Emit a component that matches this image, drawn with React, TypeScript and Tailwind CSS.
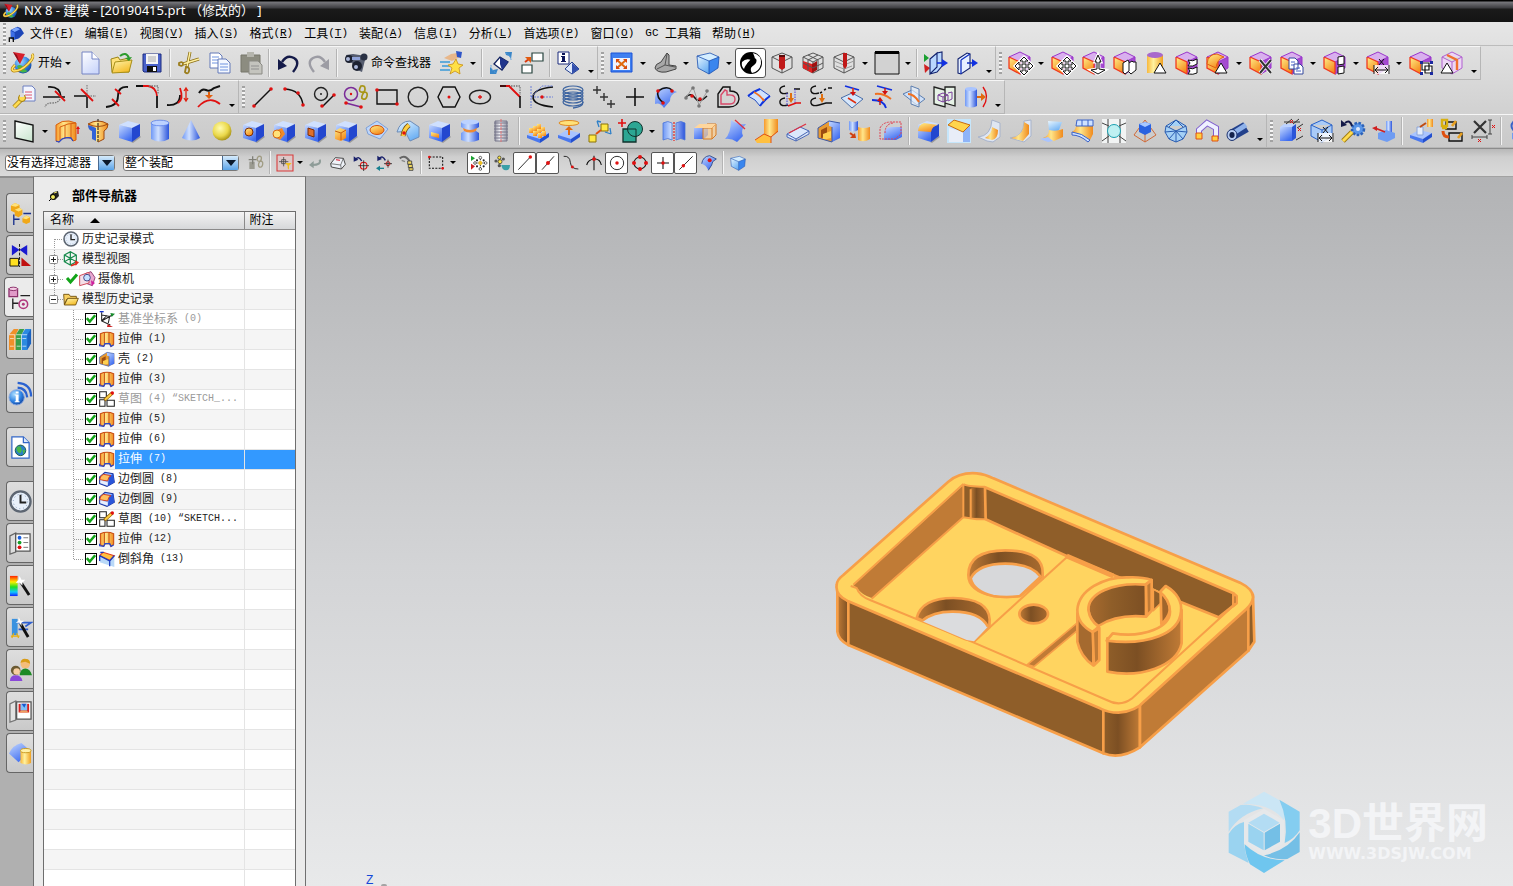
import type { ReactNode } from "react";

/* ---------- drawing helpers ---------- */

type StrokeProps = { d: string; c?: string; w?: number; dash?: string; f?: string };

function L({ d, c = "#111", w = 1.3, dash, f = "none" }: StrokeProps) {
  return <path d={d} fill={f} stroke={c} strokeWidth={w} strokeDasharray={dash} />;
}

function F({ d, f }: { d: string; f: string }) {
  return <path d={d} fill={f} />;
}

function D({ x, y, c = "#e01010", r = 1.8 }: { x: number; y: number; c?: string; r?: number }) {
  return <circle cx={x} cy={y} r={r} fill={c} />;
}

function Box() {
  return (
    <>
      <F d="M14 23l9-6 1 1-8 6z" f="#9a9a9a" />
      <F d="M2 6l9-4 12 3-8 4z" f="#cfe0ff" />
      <F d="M2 6l13 3v14L2 19z" f="url(#gBlueL)" />
      <F d="M15 9l8-4v12l-8 6z" f="#2347cf" />
    </>
  );
}

function Hex() {
  return (
    <>
      <F d="M1 6l11-5 10 5-10 5z" f="#d9b0ee" />
      <F d="M1 6l11 5v12L1 17z" f="url(#gOrange)" />
      <F d="M12 11l10-5v11l-10 6z" f="#a44bd0" />
      <L d="M1 6v11l11 6V11L1 6" c="#f03a20" />
      <L d="M1 6l11-5 10 5v11l-10 6M12 11l10-5" c="#9a35cc" w={1} />
    </>
  );
}

function WireCube({ c = "#555" }: { c?: string }) {
  return <L d="M2 6l10-4 10 4v11l-10 5-10-5zM2 6l10 5 10-5M12 11v11" c={c} w={1} f="#e8e8e855" />;
}

function Plate() {
  return (
    <>
      <F d="M1 16l9-5 13 3-9 6z" f="#a9c4ff" />
      <F d="M1 16l13 4v4L1 19z" f="#4a78ee" />
      <F d="M14 20l9-6v4l-9 6z" f="#2350d0" />
    </>
  );
}

function Cross() {
  const d = "M16 6l4 4h-3v4h4v-3l4 4-4 4v-3h-4v4h3l-4 4-4-4h3v-4h-4v3l-4-4 4-4v3h4v-4h-3z";
  return (
    <>
      <L d={d} c="#fff" w={3} f="#fff" />
      <L d={d} c="#111" w={1} f="#fff" />
    </>
  );
}

const icons: Record<string, ReactNode> = {
  nx: (
    <>
      <circle cx="12" cy="14" r="8.5" fill="url(#gGlobe)" />
      <F d="M6 15q4-3 7 2t5 1q-3 5-8 3-3-2-4-6z" f="#43b649" />
      <L d="M21 3q3 3-4 10T3 20q-4-1 1-6" c="#b9860c" w={3} />
      <L d="M21 3q3 3-4 10T3 20q-4-1 1-6" c="#ffe26a" w={1.6} />
      <F d="M2 1l12 2-5 10z" f="#d8202c" />
      <F d="M2 1l4 3 3 9z" f="#8e0d18" />
    </>
  ),
  part: (
    <>
      <F d="M4 6l10-5 5 2 5 8-7 7-2 1-7 2-4-3z" f="#1c45b8" />
      <F d="M5 6l8-4 5 3-8 4z" f="#7ba6ff" />
      <F d="M4 7l6 3v10l-5-2z" f="#3d6ee6" />
      <L d="M2 24v-6h6v6" w={2} />
    </>
  ),
  file: (
    <>
      <L d="M4 1h10l7 7v15H4z" c="#7484c4" f="url(#gPaper)" w={1} />
      <L d="M14 1v7h7" c="#7484c4" f="#fff" w={1} />
    </>
  ),
  open: (
    <>
      <L d="M2 8l7-2 2 3 9-2v14H3z" c="#9b8519" f="#ffe27a" w={1} />
      <L d="M3 22L6 11l17-2-3 12z" c="#a88f18" f="url(#gYellow)" w={1} />
      <L d="M11 5q6-5 9 2" c="#2d9b2d" w={2} />
      <F d="M16 7l7-1-3 4z" f="#2d9b2d" />
    </>
  ),
  save: (
    <>
      <L d="M3 3h18v18H4l-1-1z" c="#1c2d80" f="#4961c9" w={1} />
      <F d="M6 3h12v10H6z" f="#f4f4f4" />
      <L d="M8 6h8M8 8h8M8 10h8" c="#9a9a9a" w={0.8} />
      <F d="M7 15h10v6H7z" f="#111" />
      <F d="M13 16h3v4h-3z" f="#fff" />
    </>
  ),
  cut: (
    <>
      <L d="M13 1l-3 15M22 8L6 13" c="#8a6d14" w={3} />
      <L d="M13 1l-3 15M22 8L6 13" c="#fff0a0" w={1.4} />
      <L d="M2 12q4-2 4 1t-4 1zM9 16q4 0 3 4t-4 1z" c="#9b7d1c" w={1.8} />
    </>
  ),
  copy: (
    <>
      <L d="M2 2h9l3 3v12H2z" c="#6278b8" f="#fff" w={1} />
      <L d="M4 6h7M4 9h7M4 12h7" c="#6f93e0" w={1} />
      <L d="M10 8h8l4 4v10H10z" c="#6278b8" f="#f4f8ff" w={1} />
      <L d="M12 13h8M12 16h8M12 19h8" c="#6f93e0" w={1} />
    </>
  ),
  paste: (
    <>
      <L d="M2 4h19v17H2z" c="#77776a" f="#8c8c80" w={1} />
      <F d="M8 1h7v5H8z" f="#b5b5ad" />
      <L d="M10 10h9l4 4v9H10z" c="#8a8a84" f="#c4c4be" w={1} />
      <L d="M12 15h8M12 18h8" c="#909090" w={1} />
    </>
  ),
  undo: (
    <>
      <L d="M6 11q5-8 12-4t-1 14" c="#141a48" w={2.4} />
      <F d="M2 8v11l9-4z" f="#141a48" />
    </>
  ),
  redo: (
    <>
      <L d="M18 11q-5-8-12-4t1 14" c="#9c9ca4" w={2.4} />
      <F d="M22 8v11l-9-4z" f="#9c9ca4" />
    </>
  ),
  binoculars: (
    <>
      <F d="M2 4l7-1 13 2-4 16-7-3-3-6-6-3z" f="#555c6e" />
      <circle cx="5" cy="8" r="4" fill="#1c2130" />
      <circle cx="13" cy="15" r="5" fill="#1c2130" />
      <circle cx="4" cy="8" r="2" fill="#aab6d8" />
      <circle cx="12" cy="16" r="2" fill="#aab6d8" />
      <circle cx="20" cy="6" r="3.500" fill="#2a3144" />
      <F d="M8 6h8v3H8z" f="#8fa2d8" />
    </>
  ),
  star: (
    <>
      <L d="M0 11h10M2 15h9M0 19h10" c="#3a9bd8" w={1.5} />
      <F d="M4 7l7-4 6-1 3 4-8 4z" f="#e8b78a" />
      <F d="M16 0l6 1-1 6-4-1z" f="#2f55c8" />
      <L d="M16 8l2 5 5 1-4 3 1 6-5-3-5 3 2-6-4-3 5-1z" c="#c98f10" f="#ffe045" w={0.8} />
    </>
  ),
  rotate: (
    <>
      <L d="M5 13l6-7 8 5-6 8z" c="#10205c" f="#fff" />
      <F d="M11 6l8 5-6 8-2-6z" f="#20358c" />
      <F d="M16 1h7l-1 7-2-3-3-1zM1 16l3 3 5-1-2 5-6 0z" f="#3a86c8" />
      <L d="M2 14q0 6 6 8M17 2q5 3 5 7" c="#59a0e0" w={1} dash="1.5 1" />
    </>
  ),
  windows: (
    <>
      <L d="M12 2h11v8H12zM2 14h10v8H2z" c="#28443f" f="#fff" w={1.2} />
      <L d="M5 11l4-3" c="#d83a10" w={2} />
      <F d="M5 6h6v6z" f="#e25a10" />
    </>
  ),
  info: (
    <>
      <L d="M1 1h11v12H1z" c="#1b2a7c" f="#fff" w={1} />
      <F d="M5 2h3v2H5zM4 5h4v5h1v1H4v-1h1V6H4z" f="#0c155a" />
      <L d="M8 18l7-7 7 7-7 5z" c="#26418f" f="#dfe9fb" w={1} />
      <F d="M15 12l7 6-7 5z" f="#3350ad" />
    </>
  ),
  fit: (
    <>
      <L d="M1 2h21v19H1z" c="#1d54d8" f="#3f7ff0" w={1} />
      <F d="M3 7h17v12H3z" f="#eef3ff" />
      <L d="M7 9l9 8M16 9l-9 8" c="#e06a10" w={2} />
      <F d="M6 8h4l-4 4zM17 8v4l-4-4zM6 18v-4l4 4zM17 18h-4l4-4z" f="#d84a10" />
    </>
  ),
  angle: (
    <>
      <L d="M2 17q0-4 6-6l6-9 2 2v10l7 1v3l-10 3q-9 1-11-4z" c="#444" f="#a8a8a8" w={1} />
      <L d="M12 14l-8 4M12 14l2-11M12 14l10 2" c="#555" w={1} />
    </>
  ),
  shaded: (
    <>
      <F d="M1 5l13-3 9 4-10 4z" f="#d5eeff" />
      <F d="M1 5l12 5v13L2 17z" f="url(#gSky)" />
      <F d="M13 10l10-4-1 11-9 6z" f="#3a86ee" />
      <L d="M1 5l13-3 9 4-1 11-9 6-11-6zM1 5l12 5 10-4M13 10v13" c="#1b4fb0" w={0.8} />
    </>
  ),
  yin: (
    <>
      <circle cx="12" cy="12" r="11" fill="#000" />
      <F d="M14 2q9 2 8 11-2 8-9 9-3-4 1-8t0-12zM3 11q4-4 9-2-6 5-7 9-3-3-2-7z" f="#fff" />
      <F d="M14 7q5 0 3 5-4 5-10 6 0-7 7-11z" f="#000" />
    </>
  ),
  clip: (
    <>
      <WireCube />
      <F d="M9 4h6v13l-3 2-3-2z" f="#c01818" />
      <F d="M9 4h6v2H9z" f="#5a0a0a" />
    </>
  ),
  grid3d: (
    <>
      <WireCube />
      <F d="M2 10l9 3v9l-9-5z" f="#e02020" />
      <F d="M11 13l5-3v9l-5 3z" f="#a01010" />
      <L d="M7 4l10 5v11M17 4L7 9v10M2 12l10 5 10-5" c="#555" w={1} />
    </>
  ),
  section: (
    <>
      <WireCube />
      <L d="M2 10l10 4 10-4M4 15l8 3 8-3" c="#999" w={1} />
      <F d="M11 2h4v13l-2 3-2-3z" f="#c01818" />
    </>
  ),
  swatch: (
    <>
      <path d="M0 1h24v22H0z" fill="#d2d2d2" stroke="#111" />
      <F d="M0 0h24v3H0z" f="#000" />
    </>
  ),
  planeA: (
    <>
      <F d="M0 3l5 4-5 4z" f="#1aa030" />
      <F d="M0 13l6 4-5 5z" f="#d02020" />
      <L d="M6 8l7-6v14l-7 7zM13 2l5-1v14l-5 6-7 2" c="#10206c" f="#b9d7ff" w={1.1} />
      <L d="M13 12h6" c="#1030e0" w={1.6} />
      <F d="M18 8l6 4-6 4z" f="#1030e0" />
    </>
  ),
  planeB: (
    <>
      <L d="M3 8l9-6 3 1v14l-9 6-3-1z" c="#10206c" f="#e6f0ff" w={1.1} />
      <L d="M6 9v14M6 9l9-6M12 12h6" c="#1030c0" w={1.3} />
      <F d="M17 8l6 4-6 4z" f="#1030e0" />
    </>
  ),
  hexMove: (
    <>
      <Hex />
      <Cross />
    </>
  ),
  hexPull: (
    <>
      <Hex />
      <L d="M16 4l3 7h-2v7l6 1-7 4-7-4 6-1v-7h-2z" c="#fff" w={3} f="#fff" />
      <L d="M16 4l3 7h-2v7l6 1-7 4-7-4 6-1v-7h-2z" f="#fff" w={1} />
    </>
  ),
  hexPage: (
    <>
      <Hex />
      <L d="M10 12l5-3 1 2v9l-4 3-2-2zM16 12l3-2 1 1h3v8l-5 4-2-2" f="#fff" w={1} />
    </>
  ),
  hexCyl: (
    <>
      <F d="M3 4h16v18H3z" f="url(#gYellowH)" />
      <ellipse cx="11" cy="4" rx="8" ry="3" fill="#a868cc" />
      <L d="M16 12l6 10H10z" f="#fff" w={1} />
    </>
  ),
  hexSplit: (
    <>
      <Hex />
      <L d="M13 9q5 2 9-1v5q-4 3-9 2l2-3zM13 17q5 2 9-1v6q-4 2-9 1l2-3z" f="#fff" w={1} />
    </>
  ),
  hexRound: (
    <>
      <Hex />
      <L d="M1 13Q2 3 11 3l7 3q-7 2-8 11z" c="#e06010" f="url(#gOrange)" w={1} />
      <L d="M15 12l6 10H9z" f="#fff" w={1} />
    </>
  ),
  hexDel: (
    <>
      <Hex />
      <L d="M11 9l11 13M22 9L11 22" c="#fff" w={3.5} />
      <L d="M11 9l11 13M22 9L11 22" c="#333" w={2} />
    </>
  ),
  hexCopy: (
    <>
      <Hex />
      <L d="M9 7h6l3 3v8H9zM14 13h6l3 3v7h-9z" c="#34489c" f="#fff" w={1} />
      <L d="M11 11h4M11 14h3M16 17h4M16 20h5" c="#4a66c8" w={1} />
    </>
  ),
  hexPair: (
    <>
      <Hex />
      <L d="M15 6l6-1v8l-6 1zM15 16l6-1v7l-6 1z" f="#fff" w={1} />
    </>
  ),
  hexDim: (
    <>
      <Hex />
      <F d="M8 14h16v9H8z" f="#ffffffcc" />
      <L d="M8 14v9M23 14v9M9 19h13M12 16l-3 3 3 3M19 16l3 3-3 3M13 8l5 6M18 8l-5 6" w={1} />
    </>
  ),
  hexFrame: (
    <>
      <Hex />
      <F d="M12 11h12v12H12z" f="#fff" />
      <L d="M13 12h7v7h-7zM16 15h7v7h-7z" w={1.2} />
      <F d="M11 10h3v3h-3zM21 10h3v3h-3zM11 21h3v3h-3zM21 21h3v3h-3z" f="#1b2aa0" />
    </>
  ),
  hexTri: (
    <>
      <L d="M2 6l10-5 10 5v11l-10 6-10-6zM2 6l10 5 10-5M12 11v12" c="#b060d0" f="#ecd6f4" w={1} />
      <L d="M7 4l10 5v10" c="#f07030" w={2.4} />
      <L d="M7 12l6 10H1z" f="#fff" w={1} />
    </>
  ),

  wrench: (
    <>
      <L d="M11 1h9l3 3v12H11z" c="#6c7fc0" f="#f3f6ff" w={1} />
      <L d="M13 7h7M13 10h7M13 13h7" c="#e0526a" w={1.2} />
      <L d="M2 22l8-8" c="#a07c10" w={4.5} />
      <L d="M2 22l8-8" c="#ffdc50" w={2.8} />
      <circle cx="10" cy="13" r="3.5" fill="#ffdc50" stroke="#a07c10" />
      <F d="M8 8h4v4H8z" f="#dcdcdc" />
    </>
  ),
  trimCurve: (
    <>
      <L d="M5 2q12-1 13 10M0 12h22" w={1.6} />
      <L d="M17 14q-2 4-8 4-6 0-7 4" c="#777" dash="1.5 1" />
      <L d="M12 6l10 10" c="#e01010" w={1.8} />
    </>
  ),
  trimCross: (
    <>
      <L d="M0 11h13M13 12v11" w={1.6} />
      <L d="M13 0v11M14 11h8" c="#888" dash="1.5 1" />
      <L d="M7 4l12 12" c="#e01010" w={1.8} />
    </>
  ),
  scurve: (
    <>
      <L d="M23 2q-10-1-10 9T1 22" w={1.8} />
      <L d="M10 4l6 5M7 14l7 7" c="#e01010" w={1.8} />
    </>
  ),
  corner: (
    <>
      <L d="M0 1h12q8 1 9 10" c="#e01010" w={1.8} />
      <L d="M21 11v12M0 1h7" w={1.8} />
      <L d="M13 1h9v8" c="#777" dash="1.5 1" />
    </>
  ),
  offset: (
    <>
      <L d="M0 20q13 1 13-10" w={1.8} />
      <L d="M13 3q4 11-2 15" c="#e01010" w={1.8} />
      <L d="M19 4v11M17 6l2-3 2 3M17 13l2 3 2-3" c="#e02010" />
    </>
  ),
  project: (
    <>
      <L d="M1 8q3-5 7-3t8-2l6-2" w={2} />
      <L d="M0 22q11-12 22-3" c="#e01010" w={1.8} />
      <L d="M11 7v4" c="#e06010" w={2} />
      <F d="M7 10h8l-4 4z" f="#e06010" />
    </>
  ),
  line: (
    <>
      <L d="M3 21L20 4" w={1.5} />
      <D x={3} y={21} />
      <D x={20} y={4} />
    </>
  ),
  arc: (
    <>
      <L d="M3 4q16 1 18 16" w={1.5} />
      <D x={3} y={4} />
      <D x={16} y={8} />
      <D x={21} y={20} />
    </>
  ),
  circLine: (
    <>
      <circle cx="8" cy="9" r="6.5" fill="none" stroke="#222" strokeWidth="1.4" />
      <D x={8} y={9} c="#222" r={1} />
      <L d="M10 21l11-11" w={1.5} />
      <D x={9} y={21} />
      <D x={21} y={10} />
    </>
  ),
  circChain: (
    <>
      <circle cx="7" cy="9" r="6.5" fill="none" stroke="#7a2b98" strokeWidth="1.5" />
      <D x={7} y={9} r={1.2} />
      <L d="M2 18l15 4" c="#7a2b98" w={1.5} />
      <D x={2} y={18} />
      <D x={17} y={22} />
      <L d="M17 1q4-1 4 3t-4 3q-3-1 0-6zM20 7q4 0 3 4t-4 3q-3-1 1-7z" c="#a89618" w={1.7} />
    </>
  ),
  rect: (
    <>
      <L d="M2 5h20v14H2z" w={1.4} />
      <D x={2} y={5} />
      <D x={22} y={19} />
    </>
  ),
  circle: <circle cx="12" cy="12" r="9.8" fill="none" stroke="#222" strokeWidth="1.4" />,
  hexagon: (
    <>
      <L d="M6 2h12l5 10-5 10H6L1 12z" w={1.4} />
      <D x={12} y={12} r={1.5} />
    </>
  ),
  ellipse: (
    <>
      <ellipse cx="12" cy="12" rx="10.5" ry="6.8" fill="none" stroke="#222" strokeWidth="1.4" />
      <L d="M12 10v4M10 12h4" c="#e01010" />
    </>
  ),
  chamferLine: (
    <>
      <L d="M1 1h10M10 1l11 11" c="#e01010" w={1.8} />
      <L d="M21 11v12M1 1h6" w={1.6} />
      <L d="M12 1h9v9" c="#777" dash="1.5 1" />
    </>
  ),
  parabola: (
    <>
      <L d="M23 2Q3 4 3 12t20 10" w={1.7} />
      <L d="M1 1v22M1 12h22M1 12L12 1h11" c="#5d74d8" w={0.9} dash="2 1" />
      <D x={12} y={12} r={1.7} />
    </>
  ),
  helix: (
    <>
      {[5, 8, 11, 14, 17].map((y) => (
        <ellipse key={y} cx="12" cy={y} rx="10" ry="4" fill="none" stroke="#3d64a0" strokeWidth="1.2" />
      ))}
      <L d="M22 17q0 5-10 6" c="#3d64a0" />
    </>
  ),
  points: <L d="M5 1v8M1 5h8M12 8v8M8 12h8M19 15v8M15 19h8" c="#333" w={1.4} />,
  plus: <L d="M12 3v18M3 12h18" w={1.6} />,
  surfCurve: (
    <>
      <F d="M1 12Q3 2 12 2l11 5q-7 2-7 9l-6 7q-4-6-9-4z" f="url(#gBlueL)" />
      <L d="M4 6q9-6 14-1M4 6q-2 7 6 12" w={1.6} />
      <D x={4} y={6} />
      <D x={18} y={6} />
      <D x={9} y={18} />
    </>
  ),
  spline: (
    <>
      <L d="M1 12q5-5 9 1t12-2" w={1.5} />
      <L d="M1 13L8 2l6 18 9-15" c="#999" w={1} />
      <D x={7} y={11} />
      <D x={15} y={14} />
      <D x={8} y={3} c="#777" />
      <D x={22} y={6} c="#777" />
      <D x={1} y={13} c="#777" />
      <D x={14} y={21} c="#777" />
    </>
  ),
  offsetHeart: (
    <>
      <L d="M2 22V9l5-7h7v4q9 0 9 8-1 8-10 8z" w={1.4} />
      <L d="M5 19v-9l4-5 2 1v4q8-1 8 4 0 5-5 5z" c="#d84a6a" w={1.4} />
    </>
  ),
  bridge: (
    <>
      <L d="M1 11q7-5 12-7l10 7-10 10Q9 14 1 11z" c="#2a52c0" f="#cfe2ff" w={1} />
      <L d="M1 11Q7 6 13 4M13 21q4-6 10-10" c="#1035e0" w={2} />
      <L d="M7 7q7 4 10 9" c="#f07020" w={2} />
    </>
  ),
  hooksA: (
    <>
      <L d="M7 1Q1 2 2 6t8 2M7 13q-6 1-5 5t8 2M16 4h6" w={1.4} />
      <L d="M9 8v13M17 4v15" c="#4a40e0" w={1} dash="1.5 1" />
      <L d="M10 21l8-3h5" c="#e01010" w={1.6} />
      <F d="M10 13h6l-3 5zM12 8h2v5h-2z" f="#e07010" />
    </>
  ),
  hooksB: (
    <>
      <L d="M7 1Q1 2 2 6t8 2M7 13q-6 1-5 5t8 2l7-2h6M11 8l2-1M15 5l2-1M19 3h4" w={1.4} />
      <F d="M10 13h6l-3 5zM12 9h2v4h-2z" f="#e07010" />
    </>
  ),
  surfDown: (
    <>
      <L d="M1 13l11-5 11 6-11 9z" c="#4a6ea8" f="#d6e7fb" w={1} />
      <L d="M5 1l14 4" c="#1030e0" w={1.8} />
      <L d="M13 3v5M8 13l8 5" c="#e03010" w={1.6} />
      <F d="M10 7h6l-3 4z" f="#d01010" />
    </>
  ),
  curvesIn: (
    <>
      <L d="M6 1l15 4M1 15q12 0 14 8" c="#1030e0" w={1.8} />
      <L d="M4 9q8-1 16 5" c="#f07020" w={2} />
      <L d="M14 3v5M9 20v-6" c="#c01010" w={1.4} />
      <F d="M11 6h6l-3 4zM6 16h6l-3-4z" f="#d01010" />
    </>
  ),
  sheets: (
    <>
      <L d="M1 9l9-4 13 9-8 6z" c="#5d7fb0" f="#cfe0f8" w={1} />
      <L d="M9 1l8 3v18l-8-3z" c="#5d7fb0" f="#e8f1fdaa" w={1} />
      <L d="M6 9q6 0 11 8" c="#f07020" w={2} />
    </>
  ),
  sectionBox: (
    <>
      <L d="M1 2l11 3v17L1 19zM12 2h10v19l-10-3z" c="#222" f="#e6f2e6" w={1.3} />
      <L d="M5 10l5-2 5 2v5l-5 2-5-2zM5 10l5 2 5-2M10 12v5M15 8l4-1v7l-4 2" c="#7a3f9c" w={1} />
    </>
  ),
  wrap: (
    <>
      <F d="M1 4h12v17q-6 3-12 0z" f="url(#gBlueH)" />
      <ellipse cx="7" cy="4" rx="6" ry="2" fill="#a9c4ff" />
      <L d="M13 12h5" c="#e06a10" w={2} />
      <F d="M17 8l5 4-5 4z" f="#e06a10" />
      <L d="M19 2q7 9 0 20" c="#e01010" w={1.4} />
    </>
  ),

  datum: <L d="M3 2l18 4v17L3 19z" f="url(#gMint)" w={1.4} />,
  extrude: (
    <>
      <F d="M1 6Q7 1 14 2l7 2v17l-3 1-2-3q-5-1-9 1l-3 3-3-1z" f="url(#gOrangeH)" />
      <L d="M1 6Q7 1 14 2l7 2v17l-3 1-2-3q-5-1-9 1l-3 3-3-1zM5 8q8-4 16-4M5 8v13M10 6v13M16 5v14" c="#d86010" w={1} />
      <L d="M1 22l3 1 3-3q5-2 9-1l2 3" c="#2a48c8" />
      <L d="M23 15V9" c="#e01010" />
      <F d="M21 10l2-3 2 3z" f="#e01010" />
    </>
  ),
  extrudeSmall: (
    <>
      <L d="M2 4q10-4 20 0v16l-4 3-2-4H9l-2 4-5-2z" c="#c84a10" f="url(#gOrangeH)" w={1.6} />
      <L d="M8 3v16M15 3v16" c="#c84a10" w={1.6} />
      <L d="M1 19v3l6 1 2-4h7l2 4 4-2" c="#2a48c8" w={2} />
    </>
  ),
  revolve: (
    <>
      <F d="M2 5q10-6 20 0 0 5-4 7v8l-6 3-6-3v-8Q2 10 2 5z" f="url(#gOrangeH)" />
      <F d="M2 6q4 1 8 3v13l-4-2v-8Q2 11 2 6z" f="#3263d8" />
      <L d="M12 0v24" w={1} dash="3 1" />
      <L d="M2 5q10 5 20 0M2 5q10-6 20 0 0 5-4 7v8l-6 3" c="#a04a10" w={1} />
    </>
  ),
  box: <Box />,
  cyl: (
    <>
      <F d="M3 4h18v16q-9 5-18 0z" f="url(#gBlueH)" />
      <ellipse cx="12" cy="4" rx="9" ry="2.8" fill="#bcd2ff" stroke="#5b80ea" strokeWidth="0.8" />
    </>
  ),
  cone: <F d="M12 1l9 18q-8 5-18 0z" f="url(#gBlueH)" />,
  sphere: <circle cx="12" cy="12" r="9.5" fill="url(#gSphere)" />,
  hole: (
    <>
      <Box />
      <circle cx="8" cy="13" r="4" fill="url(#gOrange)" stroke="#7a2c08" />
    </>
  ),
  boss: (
    <>
      <Box />
      <F d="M3 12l7-3 3 6-5 6-5-3z" f="#f08a28" />
      <circle cx="5" cy="15" r="4" fill="#ffe27a" stroke="#d86a10" />
    </>
  ),
  pocket: (
    <>
      <Box />
      <L d="M5 9l6 2v7l-6-2z" c="#7a2c08" f="#e0702a" w={1} />
    </>
  ),
  pad: (
    <>
      <Box />
      <F d="M1 12l5-3 6 2v8l-5 3-6-2z" f="url(#gOrange)" />
      <L d="M1 12l6 2 5-3M7 14v7" c="#c86010" w={1} />
    </>
  ),
  emboss: (
    <>
      <L d="M1 9l11-7 11 8-8 10-12-5z" c="#7fa0d8" f="#bcd6fa" w={1} />
      <ellipse cx="12" cy="11" rx="7" ry="4.5" fill="url(#gOrange)" stroke="#d05010" />
    </>
  ),
  sweepPad: (
    <>
      <L d="M1 13q3-11 13-11l9 6v10l-9 4-4-8q-4-2-9-1z" c="#6d8cb8" f="url(#gSky)" w={1} />
      <L d="M7 17q1-7 6-11" c="#7a5510" w={5} />
      <L d="M7 17q1-7 6-11" c="#ffd040" w={3.5} />
      <D x={8} y={14} />
    </>
  ),
  slot: (
    <>
      <Box />
      <F d="M4 13l8 2v4l-8-2z" f="url(#gOrange)" />
    </>
  ),
  groove: (
    <>
      <F d="M3 3h18v5l-3 2v2l3 2v7q-9 4-18 0v-7l3-2v-2L3 8z" f="url(#gBlueH)" />
      <ellipse cx="12" cy="3" rx="9" ry="2.5" fill="#bcd2ff" />
      <F d="M5 9q7 4 14 0l-1 3q-6 3-12 0z" f="#f08a30" />
    </>
  ),
  thread: (
    <>
      <F d="M6 2h12v20H6z" f="url(#gSteelH)" />
      <L d="M5 4h14M5 7h14M5 10h14M5 13h14M5 16h14M5 19h14M6 2h12v20H6z" c="#77778a" w={1} />
      <L d="M12 0v24" c="#e07070" w={1} dash="3 1" />
    </>
  ),
  pattern: (
    <>
      <Plate />
      {[
        [5, 11], [9, 9], [13, 7], [9, 14], [13, 12], [17, 10], [14, 16], [18, 14],
      ].map(([x, y]) => (
        <F key={`${x}-${y}`} d={`M${x - 2} ${y - 2}h4v5h-4z`} f="url(#gOrange)" />
      ))}
    </>
  ),
  liftPlane: (
    <>
      <Plate />
      <ellipse cx="12" cy="4" rx="10" ry="2.5" fill="#ffe27a" stroke="#e08a20" />
      <L d="M12 8v8" c="#e06a10" w={2} />
      <F d="M8 11l4-4 4 4z" f="#e06a10" />
    </>
  ),
  instance: (
    <>
      <L d="M1 16h7v7H1zM13 5h7v7h-7z" c="#8a7208" f="#ffe845" w={1} />
      <L d="M8 15l5-4" c="#e05010" w={2} />
      <L d="M9 2l4 1M9 2l2 6M22 9l1 6M23 15l-6-2" c="#2f80c8" />
    </>
  ),
  unite: (
    <>
      <L d="M4 10h13v13H4z" c="#10322c" f="#2ca693" />
      <circle cx="16" cy="10" r="7.5" fill="#2ca693" stroke="#10322c" />
      <L d="M9 10h8v8" c="#10322c" w={1} />
      <L d="M3 0v8M-1 4h8" c="#e01010" w={1.6} />
    </>
  ),
  book: (
    <>
      <F d="M1 4q5-3 9 0v17q-4-3-9 0zM14 4q5-3 9 0v17q-4-3-9 0z" f="url(#gBlueH)" />
      <L d="M1 4q5-3 9 0v17q-4-3-9 0zM14 4q5-3 9 0v17q-4-3-9 0z" c="#4a74d8" w={0.8} />
      <L d="M12 3v19" c="#e03030" dash="2 1" />
    </>
  ),
  boxBool: (
    <>
      <F d="M1 9l5-4h9v11l-4 4H1z" f="url(#gBlueL)" />
      <L d="M10 9l4-4h9v11l-4 4h-9zM10 9h9v11M19 9l4-4" c="#d87a20" f="#ffd090aa" w={1} />
      <F d="M1 9l5-4h17l-4 4z" f="#ffd69c" />
    </>
  ),
  sheetCut: (
    <>
      <F d="M7 1q6 5 15 4-6 6-3 12l-6 6q-6-4-12-3Q7 14 7 1z" f="url(#gBlueL)" />
      <L d="M11 1l10 9" c="#e03040" />
    </>
  ),
  sewn: (
    <>
      <F d="M9 0h14v13l-7 5-7-3z" f="url(#gOrangeH)" />
      <F d="M0 21l9-6 7 3v6H2z" f="#ffc040" />
      <L d="M0 21l9-6 7 3 7-6M16 18v6" c="#e05010" w={1} />
    </>
  ),
  slab: (
    <>
      <L d="M1 15l13-7 9 4-13 8zM1 15v3l9 4v-2M10 22l13-7v-3" c="#4a68b8" f="#dbe8fb" w={1} />
      <L d="M3 14l17-9" c="#e03040" />
    </>
  ),
  shell: (
    <>
      <F d="M1 9l10-6 12 2v14l-9 4-13-4z" f="#e89a30" />
      <F d="M12 2l11 2v15l-8 4V8l-3-1z" f="url(#gBlueL)" />
      <F d="M4 11l6-3v10l-6 1z" f="#9b4c10" />
      <F d="M6 15l8-3v7l-8 2z" f="#ffd050" />
      <L d="M1 9l11-7 11 2M1 9v10l14 4V8" c="#3a58a8" w={1} />
    </>
  ),
  thicken: (
    <>
      <F d="M1 2q5 2 9 0v9q-5 3-9 0z" f="url(#gBlueH)" />
      <F d="M10 8q6 2 12 0v12q-6 4-12 1z" f="url(#gOrangeH)" />
      <L d="M2 14l4 3" c="#d04010" w={2} />
      <F d="M2 19h6l-1-5z" f="#d04010" />
    </>
  ),
  scale: (
    <>
      <F d="M5 14q1-6 7-6h11v10l-6 3H5z" f="url(#gBlueL)" />
      <L d="M1 9q3-6 11-6h10v12l-6 5H1zM6 14q0-9 8-10" c="#e04050" w={1} dash="2 1" />
    </>
  ),
  blend: (
    <>
      <Box />
      <F d="M2 12q0-6 6-8l14 2q-6 1-7 7z" f="url(#gOrange)" />
    </>
  ),
  blendSmall: (
    <>
      <L d="M1 9l8-7 12 2 2 13-11 6L1 19z" c="#2038a0" f="#8fb4ff" w={1.6} />
      <F d="M15 9l6-5 2 13-10 6z" f="#2a55d8" />
      <L d="M1 13q1-7 6-8l11 2q-4 1-5 8z" c="#d03a20" f="#ffc060" w={1.4} />
      <F d="M2 14l11 3v5L2 18z" f="#e8eefc" />
    </>
  ),
  chamfer: (
    <>
      <F d="M0 0h24v24H0z" f="#c6e6fb" />
      <F d="M2 9l14 4v10H2z" f="#e8edf8" />
      <F d="M16 13l7-7v17h-7z" f="#8fb4f8" />
      <L d="M1 6l6-5 16 5-7 7z" c="#c86a10" f="#ffd54c" w={1} />
    </>
  ),
  chamferSmall: (
    <>
      <F d="M1 2l22 6v16L1 17z" f="#b8d8f8" />
      <L d="M1 7l5-5 17 5-7 7z" c="#e03a20" f="#ffc040" w={1.6} />
      <L d="M1 7v8M1 7l15 8v8M16 15l7-8M2 2h5" c="#1c3cc0" w={2} />
    </>
  ),
  faceBlend: (
    <>
      <L d="M14 1l8 3v14l-7 5-6-1-9-4q13-1 14-17z" c="#a8b4cc" f="#dfe6f2" w={1} />
      <F d="M14 8l6 3q0 9-6 10l-7-2q7-4 7-11z" f="url(#gOrangeH)" />
    </>
  ),
  softBlend: (
    <>
      <L d="M15 2l7-1v16l-7 6-14-4q14-1 14-17z" c="#a8b4cc" f="#dfe6f2" w={1} />
      <F d="M15 3l5 3v9l-6 7-12-3Q15 17 15 3z" f="url(#gOrangeH)" />
    </>
  ),
  bridgeSurf: (
    <>
      <F d="M8 2l14 1-3 8q-4 3-10 0z" f="url(#gSky)" />
      <F d="M9 11q7 2 14-1v8l-9 4-11-3q6-2 6-8z" f="url(#gOrangeH)" />
      <F d="M0 20l8-2 5 4-5 1z" f="#a9c4ff" />
    </>
  ),
  mesh: (
    <>
      <F d="M5 6l17 1v8l-3 6L1 13q4-2 4-7z" f="url(#gOrangeH)" />
      <L d="M6 1h16v6H5zM11 1v6M17 1v6M1 13q10 1 18 8l-2 2Q9 16 1 16z" c="#3a62c8" f="#cfe2ff" w={1} />
    </>
  ),
  styled: (
    <>
      <F d="M0 0h24v24H0z" f="#f2f4f4" />
      <L d="M0 4l7 3M24 4l-7 3M0 22l7-5M24 22l-7-5M6 0v24M18 0v24" c="#444" w={1} />
      <circle cx="12" cy="12" r="6.5" fill="#bff0f2" stroke="#1aa0b0" />
    </>
  ),
  pyramid: (
    <>
      <L d="M1 16L12 1l11 15-11 7zM12 14v9" c="#d06a38" w={1} />
      <F d="M6 5l6-2 6 2v8l-6 3-6-3z" f="#2a62e0" />
      <F d="M6 5l6-2 6 2-6 3z" f="#a9c8ff" />
    </>
  ),
  gem: (
    <L
      d="M12 1l10 6 1 6-4 7-7 3-7-3-4-7 1-6zM2 7l10 5 10-5M1 13l11-1 11 1M12 12v11M12 12L5 20M12 12l7 8M12 1L5 8M12 1l7 7"
      c="#2a5cb0"
      f="#a4d0f6"
      w={1}
    />
  ),
  pipeBend: (
    <>
      <L d="M4 20v-9l8-7 9 5v11" c="#8060d0" w={6} />
      <L d="M4 20v-9l8-7 9 5v11" c="#eef0ff" w={4} />
      <L d="M1 14h6v6H1zM17 17h6v5h-6z" c="#e05010" f="#ffd040" w={1} />
    </>
  ),
  tube: (
    <>
      <L d="M6 16L20 8" c="#23418c" w={11} />
      <L d="M6 15L20 6" c="#8fb2ea" w={5} />
      <ellipse cx="6" cy="16" rx="5" ry="5.5" fill="#b8cdf2" stroke="#1d3370" />
      <ellipse cx="6" cy="16" rx="2.6" ry="3" fill="#14224c" />
    </>
  ),
  boxDim: (
    <>
      <F d="M1 8l4-3h11l-3 3z" f="#bcd2ff" />
      <F d="M1 8h12v14H1z" f="url(#gBlueL)" />
      <F d="M13 8l4-3v14l-4 3z" f="#2a55d8" />
      <L d="M5 3h16M7 5l6-5M14 5l6-5M18 9l6-4M17 21l7-4" c="#333" w={1} />
      <L d="M19 9l3 3M22 9l-3 3M11 1l3 3M14 1l-3 3" c="#e01010" w={1} />
    </>
  ),
  hexBlueDim: (
    <>
      <L d="M1 6l11-5 10 5v11l-10 6-11-6zM1 6l11 5 10-5M12 11v12" c="#2a62c8" f="#a9cbf8" w={1} />
      <F d="M8 14h16v9H8z" f="#ffffffcc" />
      <L d="M8 14v9M23 14v9M9 19h13M12 16l-3 3 3 3M19 16l3 3-3 3M13 8l5 6M18 8l-5 6" w={1} />
    </>
  ),
  gearWrench: (
    <>
      <circle cx="17" cy="10" r="6" fill="#5a96e8" stroke="#2d62b8" strokeWidth="2.5" strokeDasharray="2.5 1.5" />
      <circle cx="17" cy="10" r="2" fill="#dfe9fb" />
      <L d="M2 22l9-9" c="#a07c10" w={5} />
      <L d="M2 22l9-9" c="#ffdc50" w={3} />
      <L d="M4 4q5-4 7 3" c="#141a48" w={2} />
      <F d="M0 1v7l6-2z" f="#141a48" />
    </>
  ),
  replace: (
    <>
      <F d="M14 2h6v14h-6z" f="url(#gBlueH)" />
      <F d="M6 14l8-3 9 3v5l-8 4-9-3z" f="#6f9cf2" />
      <L d="M3 9l10 4" c="#d02020" w={1.6} />
      <F d="M0 9l5-2v5z" f="#d02020" />
    </>
  ),
  moveFeat: (
    <>
      <Plate />
      <L d="M8 8h6v8H8z" c="#8aa4d8" f="#e4edfb" w={1} />
      <F d="M18 0h6v8h-6z" f="url(#gOrangeH)" />
      <L d="M11 8l6-4" c="#c04a10" w={2} />
    </>
  ),
  reorder: (
    <>
      <L d="M6 3h10v7H6zM9 14h13v8H9z" c="#111" w={1.4} />
      <L d="M2 1h5v6H2zM2 9h5" c="#d8b010" w={2.4} />
      <L d="M3 12q0 6 6 6" c="#e05010" w={3} />
      <L d="M12 7l4-5M18 19l4-5" c="#e8a020" w={2.6} />
    </>
  ),
  xDim: (
    <>
      <L d="M3 2l12 12M15 2L3 14" c="#333" w={2.2} />
      <L d="M19 1v14M17 1h4M17 15h4M1 18h15M1 16v4M16 16v4" c="#444" w={1} />
      <L d="M21 6l3 3M24 6l-3 3M7 20l3 3M10 20l-3 3" c="#e01010" w={1} />
    </>
  ),
  spool: (
    <>
      <circle cx="9" cy="7" r="5.5" fill="none" stroke="#3a62c8" strokeWidth="2" />
      <F d="M4 14l8-3 8 3v5l-8 4-8-3z" f="#6f9cf2" />
    </>
  ),

  // selection bar
  dimLink: (
    <>
      <F d="M2 10h8v11H2z" f="#9a9a90" />
      <L d="M7 2v12M1 7h12" c="#808078" w={2} />
      <L d="M16 2q5-1 4 4t-5 3q-3-3 1-7zM18 9q5 0 4 5t-5 4q-3-3 1-9z" c="#a09c84" w={2} />
    </>
  ),
  filterBox: (
    <>
      <L d="M0 0h24v24H0z" c="#d83a3a" f="#dcc8c8" w={1.6} />
      <L d="M10 3v14M3 10h14M7 7h6v6H7z" c="#444" w={1.2} />
      <F d="M12 12h10l-4 4v6l-2-2v-4z" f="#f0c020" />
    </>
  ),
  back: (
    <>
      <L d="M19 7q3 8-11 8" c="#8e9c98" w={3} />
      <F d="M3 15l7-6v11z" f="#8e9c98" />
    </>
  ),
  eraserBox: (
    <>
      <L d="M1 13l7-9 12 1 3 9-6 7-15-3z" c="#333" f="#eef2f8" />
      <L d="M1 13l15 2 1 6M16 15l4-10" c="#444" w={1} />
      <L d="M9 7l6 1" c="#e04050" w={2} />
    </>
  ),
  undoTarget: (
    <>
      <L d="M4 6q5-5 9 3" c="#18206a" w={2.2} />
      <F d="M1 2v8l7-3z" f="#18206a" />
      <circle cx="16" cy="16" r="5" fill="none" stroke="#e01010" strokeWidth="1.6" />
      <L d="M16 8v16M8 16h16" c="#222" w={1.2} />
    </>
  ),
  backTarget: (
    <>
      <L d="M5 5q5-5 9 3" c="#18206a" w={2.2} />
      <F d="M2 1v8l7-3z" f="#18206a" />
      <circle cx="18" cy="13" r="3" fill="none" stroke="#e01010" strokeWidth="1.4" />
      <L d="M18 7v12M12 13h12" c="#222" w={1.2} />
      <L d="M12 20H5" c="#188090" w={2} />
      <F d="M0 20l6-4v8z" f="#188090" />
    </>
  ),
  chainBrush: (
    <>
      <L d="M1 5q6-4 10-1t5 6" c="#666" w={3} />
      <L d="M4 8l5 2" c="#888" w={2} />
      <L d="M13 9h6v5h-6zM14 14h6v5h-6zM15 19h6v4h-6z" c="#444" f="#f0d860" />
    </>
  ),
  marquee: (
    <>
      <L d="M2 3h20v17H2z" w={1.6} dash="3 2" />
      <D x={2} y={3} r={2} />
      <D x={22} y={20} r={2} />
    </>
  ),
  snapAll: (
    <>
      <F d="M0 1l6 4-6 4z" f="#1aa030" />
      <F d="M0 13l6 4-6 5z" f="#d02020" />
      <L d="M14 3v18M5 12h18" dash="2 1" />
      {[[14, 4], [14, 21], [6, 12], [22, 12]].map(([x, y]) => (
        <circle key={`${x}-${y}`} cx={x} cy={y} r="2" fill="#fff" stroke="#222" />
      ))}
      {[[9, 8], [19, 17], [19, 8], [9, 17]].map(([x, y]) => (
        <circle key={`${x}-${y}`} cx={x} cy={y} r="1.6" fill="#222" />
      ))}
      <D x={14} y={12} c="#f0c020" r={3} />
    </>
  ),
  snapCup: (
    <>
      <circle cx="8" cy="4" r="2.4" fill="#ffe845" stroke="#222" />
      <circle cx="14" cy="6" r="2.4" fill="#555" />
      <circle cx="3" cy="9" r="2.4" fill="#555" />
      <circle cx="9" cy="10" r="3" fill="#ffe845" stroke="#222" />
      <circle cx="8" cy="16" r="2.4" fill="#555" />
      <F d="M11 15h13q0 8-6 8t-7-8z" f="#3aa0a8" />
    </>
  ),
  endPt: (
    <>
      <L d="M2 22L20 3" />
      <D x={20} y={3} r={2.6} />
    </>
  ),
  midPt: (
    <>
      <L d="M3 22L21 2" />
      <D x={12} y={12} r={3} />
    </>
  ),
  ctrlPt: (
    <>
      <L d="M1 2q9-1 10 9t12 10" />
      <D x={14} y={18} r={2.2} />
    </>
  ),
  interPt: (
    <>
      <L d="M12 1v22M1 15q2-8 11-9t11 9" w={1.6} />
      <D x={12} y={6} r={2.8} />
    </>
  ),
  centerPt: (
    <>
      <circle cx="12" cy="12" r="10" fill="none" stroke="#222" strokeWidth="1.4" />
      <D x={12} y={12} r={2.6} />
    </>
  ),
  quadPt: (
    <>
      <circle cx="12" cy="12" r="9" fill="none" stroke="#222" strokeWidth="1.6" />
      <D x={12} y={3} r={3} />
      <D x={12} y={21} r={3} />
      <D x={3} y={12} r={3} />
      <D x={21} y={12} r={3} />
    </>
  ),
  existPt: (
    <>
      <L d="M12 3v18M3 12h18" w={1.6} />
      <D x={12} y={12} r={2.6} />
    </>
  ),
  onCurve: (
    <>
      <L d="M2 22L22 2" />
      <D x={8} y={16} r={2.6} />
    </>
  ),
  onFace: (
    <>
      <F d="M1 13Q3 2 13 1l10 5q-7 3-7 9l-5 8q-3-8-10-10z" f="url(#gBlueL)" />
      <L d="M1 13Q3 2 13 1l10 5q-7 3-7 9l-5 8" c="#2a4488" />
      <D x={13} y={8} r={3} />
    </>
  ),

  // tree
  clock: (
    <>
      <circle cx="12" cy="12" r="10.5" fill="#e8f0fa" stroke="#5d6672" strokeWidth="2.4" />
      <circle cx="12" cy="12" r="7.5" fill="none" stroke="#7f95b8" strokeDasharray="1 3" />
      <L d="M12 5v8h6" c="#222" w={2} />
    </>
  ),
  greenCube: (
    <>
      <L d="M2 6l9-5 9 5v10l-9 5-9-5zM2 6l9 5 9-5M11 1v20M2 16l9-5 9 5" c="#178a4c" w={1.8} />
      <L d="M12 22l8-3" c="#e02a1a" w={2.4} />
      <F d="M18 14l6 3-5 5z" f="#e02a1a" />
    </>
  ),
  camera: (
    <>
      <L d="M9 4l9-3 6 9-4 12-8-3z" c="#8a2f6a" f="#e8a8d0" />
      <L d="M1 7v15l14-4V2z" c="#d04a5a" f="#f4dfe8" w={1.5} />
      <circle cx="12" cy="10" r="5" fill="#c4e0ff" stroke="#4a4a8a" strokeWidth="1.5" />
      <F d="M18 14l6 4-5 4z" f="#d020a0" />
    </>
  ),
  folder: (
    <>
      <L d="M1 5h8l2 3h9v4H6L2 20z" c="#6b4a08" f="#f8d060" />
      <L d="M2 21l5-10h16l-4 10z" c="#6b4a08" f="url(#gYellow)" />
    </>
  ),
  csys: (
    <>
      <L d="M4 2v13l13 6M4 15L20 6M4 6l12 2-2 10M4 15q7-8 8-8" c="#222" w={1.6} />
      <F d="M17 3l7 1-5 5z" f="#178a2c" />
      <F d="M13 20l8 4h-9z" f="#d02020" />
      <L d="M1 1h6" c="#1030d0" w={2} />
    </>
  ),
  sketch: (
    <>
      <L d="M1 1h10v9H1zM1 13h8v10H1zM12 14h11v9H12z" c="#222" f="#fff" w={1.6} />
      <L d="M8 14L20 3" c="#8a5a08" w={5} />
      <L d="M9 13L19 4" c="#ffd040" w={3} />
      <D x={20} y={3} r={2.6} />
    </>
  ),
  check: <L d="M2 10l7 8L22 3" c="#12a418" w={6} />,

  // resource bar
  asm: (
    <>
      <F d="M2 4l4-3 5 2v6l-5 2-4-2zM6 8l5-2 3 2v5l-4 3-4-2zM14 17l4-3 4 2v5l-4 2-4-2z" f="#f0a818" />
      <F d="M2 4l4-3 5 2-4 2zM6 8l5-2 3 2-4 2zM14 17l4-3 4 2-4 2z" f="#ffe27a" />
      <L d="M15 12h8M5 13v11M5 18h6" c="#18308c" w={1.4} />
    </>
  ),
  constraint: (
    <>
      <F d="M3 1l8 5-8 6zM19 1l-8 5 8 6z" f="#1a1ad0" />
      <L d="M1 15h9v8H1z" f="#ffe020" w={1} />
      <F d="M13 14l10 9H13z" f="#c01010" />
      <L d="M11 0v24" w={1} dash="3 1.5" />
    </>
  ),
  partNav: (
    <>
      <L d="M1 3h9v8H1z" c="#8a2f6a" f="#e09ac8" />
      <ellipse cx="5.5" cy="3" rx="4.5" ry="1.8" fill="#f4cbe4" stroke="#8a2f6a" />
      <L d="M13 10h10M5 13v11M5 18h6" c="#222" w={1.4} />
      <circle cx="16" cy="19" r="4.5" fill="none" stroke="#b0387c" strokeWidth="1.6" />
      <circle cx="16" cy="19" r="1.5" fill="#b0387c" />
    </>
  ),
  books: (
    <>
      <F d="M0 7l5-6h5L7 7v16H0z" f="#f0902a" />
      <F d="M7 7l4-6h5l-3 6v16H7z" f="#3ca048" />
      <F d="M13 7l4-6h6v15l-4 7h-6z" f="#2c8ae0" />
      <F d="M19 7l4-6v15l-4 7z" f="#1a62c0" />
      <L d="M0 7h6v16M7 7h6v16M13 7h6M1 11h4M1 19h4M8 11h4M8 19h4M14 11h4M14 19h4" c="#ffffffaa" w={1} />
    </>
  ),
  hd3d: (
    <>
      <L d="M9 1q14 1 14 14M9 6q9 0 10 10" c="#2a62d0" w={2.4} />
      <circle cx="8" cy="16" r="8" fill="url(#gGlobe)" stroke="#88a8e0" />
      <F d="M7 10h3v2H7zM6 13h4v7h1v1H6v-1h1v-6H6z" f="#fff" />
    </>
  ),
  web: (
    <>
      <L d="M3 1h12l6 6v16H3z" c="#3568c8" f="#fff" />
      <L d="M15 1v6h6" c="#3568c8" f="#dbe8fb" />
      <circle cx="12" cy="15" r="5.5" fill="#2a7ec8" stroke="#1a5a4a" />
      <F d="M8 12q4-3 5 1t-2 5q-4-2-3-6zM14 14l3 1-2 4z" f="#48b848" />
    </>
  ),
  roles: (
    <>
      <L d="M1 4l6-3v20l-6 2z" c="#666" f="#ddd" />
      <L d="M7 2h15v18H7z" c="#555" f="#fff" />
      <D x={11} y={6} c="#1a60e0" r={2} />
      <D x={11} y={11} c="#18a028" r={2} />
      <D x={11} y={16} r={2} />
      <L d="M15 6h5M15 11h5M15 16h5" c="#777" w={1} />
    </>
  ),
  rainbow: (
    <>
      <F d="M1 2h8v21H1z" f="url(#gRainbow)" />
      <L d="M12 8l9 14" c="#111" w={3} />
      <F d="M11 2l2 4h4l-3 3v3l-3-3H7l3-3z" f="#fff" />
    </>
  ),
  weld: (
    <>
      <F d="M3 3h6v17H3z" f="#3a92e0" />
      <L d="M2 21h9M5 18l-2 5M8 18l2 5" c="#e8b010" />
      <L d="M9 7h14l-6 4M10 14h10" c="#2f60d0" w={1.8} />
      <L d="M12 8l8 14" c="#111" w={3} />
      <F d="M10 1l2 4h4l-3 2v4l-2-4H7l3-2z" f="#fff" />
    </>
  ),
  people: (
    <>
      <circle cx="17" cy="6" r="5" fill="#f4bd7a" />
      <F d="M12 5q1-5 6-4 4 0 4 5l-5-2z" f="#d89c18" />
      <F d="M11 18q1-7 6-7t7 7z" f="#1c8a24" />
      <circle cx="7" cy="13" r="5" fill="#6b5a32" />
      <circle cx="8" cy="14" r="3.4" fill="#f8cfa0" />
      <F d="M1 24q0-6 6-6t7 6z" f="#8a48d8" />
    </>
  ),
  portrait: (
    <>
      <L d="M1 4l6-3v20l-6 2z" c="#777" f="#e2e2e2" />
      <L d="M8 2h15v18H8z" c="#555" f="#fff" />
      <F d="M10 4h11v9H10z" f="#d82020" />
      <F d="M12 4h7v7h-7z" f="#7fc0f8" />
      <F d="M13 4h5l-2 4z" f="#1a58d0" />
      <F d="M10 13l3-2h5l3 2z" f="#f0a060" />
    </>
  ),
  shapes: (
    <>
      <F d="M0 12Q4 3 13 1l9 8-12 12z" f="url(#gBlueL)" />
      <F d="M12 9h11v13q-5 3-11 0z" f="url(#gYellowH)" />
      <ellipse cx="17.5" cy="9" rx="5.5" ry="2.2" fill="#fff0a8" stroke="#c89a20" />
    </>
  ),
};

function Icon({ name, size = 24 }: { name: string; size?: number }) {
  return (
    <svg width={size} height={size} viewBox="0 0 24 24" className="shrink-0 overflow-visible" aria-hidden="true">
      {icons[name]}
    </svg>
  );
}

function Gradients() {
  const lin = (id: string, from: string, to: string, mid?: string, horizontal = false) => (
    <linearGradient id={id} x1="0" y1="0" x2={horizontal ? "1" : "0.6"} y2={horizontal ? "0" : "1"}>
      <stop offset="0" stopColor={from} />
      {mid && <stop offset="0.4" stopColor={mid} />}
      <stop offset="1" stopColor={to} />
    </linearGradient>
  );
  return (
    <svg width="0" height="0" className="absolute" aria-hidden="true">
      <defs>
        {lin("gBlueL", "#c4d8ff", "#3f6df0")}
        {lin("gBlueH", "#6f98f6", "#2c55dc", "#cfe0ff", true)}
        {lin("gOrange", "#fff08a", "#f58a1c")}
        {lin("gOrangeH", "#f79a2c", "#f08a1c", "#ffe68a", true)}
        {lin("gYellow", "#fff6b0", "#f4bc28")}
        {lin("gYellowH", "#f8b83c", "#f0a020", "#fff2a0", true)}
        {lin("gPaper", "#ffffff", "#cdd8fb")}
        {lin("gSky", "#e8f6ff", "#6cb0f4")}
        {lin("gMint", "#ffffff", "#cfe8d4")}
        {lin("gSteelH", "#9a9aa8", "#9a9aa8", "#f4f4f8", true)}
        {lin("mLeft", "#c07b36", "#7c4f23", undefined, true)}
        {lin("mCorner", "#8f5e29", "#c07b36", "#7c4f23", true)}
        {lin("mHole", "#c07b36", "#a96b2f", "#7c4f23", true)}
        {lin("mRing", "#a96b2f", "#7c4f23", "#8f5e29", true)}
        <radialGradient id="gSphere" cx="0.4" cy="0.35" r="0.7">
          <stop offset="0" stopColor="#fffcb0" />
          <stop offset="0.6" stopColor="#ead84a" />
          <stop offset="1" stopColor="#a08a10" />
        </radialGradient>
        <radialGradient id="gGlobe" cx="0.35" cy="0.3" r="0.8">
          <stop offset="0" stopColor="#a8dcff" />
          <stop offset="0.6" stopColor="#2a7ee0" />
          <stop offset="1" stopColor="#123a90" />
        </radialGradient>
        <linearGradient id="gRainbow" x1="0" y1="0" x2="0" y2="1">
          <stop offset="0" stopColor="#ff2000" />
          <stop offset="0.3" stopColor="#ffee00" />
          <stop offset="0.55" stopColor="#20e020" />
          <stop offset="0.8" stopColor="#10c8ff" />
          <stop offset="1" stopColor="#1020ff" />
        </linearGradient>
      </defs>
    </svg>
  );
}

/* ---------- toolbars ---------- */

function Grip() {
  return (
    <span className="w-2 shrink-0 flex justify-center items-center">
      <span className="w-[3px] h-[22px] bg-[repeating-linear-gradient(#a2a2a2_0_2px,#f4f4f4_2px_4px)]" />
    </span>
  );
}

function Sep() {
  return (
    <span className="w-[6px] shrink-0 flex justify-center py-[2px]">
      <span className="w-[2px] bg-[#f4f4f4] border-l border-[#b4b4b4]" />
    </span>
  );
}

const dropStyles = {
  normal: "w-3 shrink-0 flex justify-center items-center",
  narrow: "w-[7px] shrink-0 flex justify-center items-center",
  low: "w-[13px] shrink-0 flex justify-center items-end pb-[6px]",
};

function Drop({ kind = "normal" }: { kind?: keyof typeof dropStyles }) {
  return (
    <button aria-label={kind === "low" ? "工具条选项" : "展开"} className={dropStyles[kind]}>
      <span className="border-x-[3px] border-t-[3px] border-x-transparent border-t-black" />
    </button>
  );
}

// "|" separator, "v" drop-down arrow, ">" overflow arrow, a "*" prefix marks a pressed button
function Tools({ items }: { items: string }) {
  return items.split(" ").map((item, i) => {
    if (item === "|") return <Sep key={i} />;
    if (item === "v") return <Drop key={i} />;
    if (item === ">") return <Drop key={i} kind="low" />;
    const on = item.startsWith("*");
    const name = item.replace("*", "");
    return (
      <button
        key={i}
        aria-label={name}
        className={
          on
            ? "w-[31px] h-[30px] self-center shrink-0 flex items-center justify-center bg-white border border-[#555] rounded-[3px]"
            : "w-[31px] shrink-0 flex items-center justify-center"
        }
      >
        <Icon name={name} />
      </button>
    );
  });
}

function Toolbar({ children, end = true }: { children: ReactNode; end?: boolean }) {
  return (
    <div
      role="toolbar"
      className={
        end
          ? "flex shrink-0 border-t border-t-[#f6f6f6] border-b border-b-[#b6b6b6] border-r border-r-[#b6b6b6]"
          : "flex grow border-t border-t-[#f6f6f6] border-b border-b-[#b6b6b6]"
      }
    >
      <Grip />
      {children}
    </div>
  );
}

function SnapTools({ items }: { items: string }) {
  return items.split(" ").map((item, i) => {
    if (item === "|") return <Sep key={i} />;
    if (item === "v") return <Drop key={i} />;
    if (item === ",") return <Drop key={i} kind="narrow" />;
    const on = item.startsWith("*");
    const name = item.replace("*", "");
    return (
      <button
        key={i}
        aria-label={name}
        className={
          on
            ? "w-[23px] h-[22px] self-center shrink-0 flex items-center justify-center bg-white border border-[#555] rounded-[2px]"
            : "w-[23px] shrink-0 flex items-center justify-center"
        }
      >
        <Icon name={name} size={16} />
      </button>
    );
  });
}

function FilterSelect({ label, value, className }: { label: string; value: string; className: string }) {
  return (
    <span className={`relative shrink-0 self-center h-4 ${className}`}>
      <select
        aria-label={label}
        className="appearance-none block w-full h-4 bg-white border border-[#777] rounded-[3px] pl-px text-xs leading-[14px] text-black"
      >
        <option>{value}</option>
      </select>
      <span className="absolute right-px top-px w-4 h-[14px] flex items-center justify-center bg-linear-to-b from-[#d6ebfb] to-[#5aa4e8] border-l border-[#4a6a90] pointer-events-none">
        <span className="border-x-[5px] border-t-[6px] border-x-transparent border-t-[#0c1a2c]" />
      </span>
    </span>
  );
}

const menus = [
  ["文件", "F"],
  ["编辑", "E"],
  ["视图", "V"],
  ["插入", "S"],
  ["格式", "R"],
  ["工具", "T"],
  ["装配", "A"],
  ["信息", "I"],
  ["分析", "L"],
  ["首选项", "P"],
  ["窗口", "O"],
  ["工具箱", ""],
  ["帮助", "H"],
];

function MenuBar() {
  return (
    <nav className="h-6 flex items-stretch border-b border-[#bcbcbc] text-xs">
      <Grip />
      <span className="w-[22px] shrink-0 flex items-center">
        <Icon name="part" size={16} />
      </span>
      {menus.map(([label, key]) => (
        <button key={label} className="shrink-0 flex items-center mr-[11px] whitespace-pre">
          {!key && <span className="font-['Liberation_Mono'] text-[11px]">GC </span>}
          {label}
          {key && (
            <span className="font-['Liberation_Mono'] text-[11px]">
              (<u>{key}</u>)
            </span>
          )}
        </button>
      ))}
    </nav>
  );
}

/* ---------- part navigator ---------- */

type Row = {
  name: string;
  suffix?: string;
  icon: string;
  level: 0 | 1;
  box?: "+" | "-";
  ticked?: boolean;
  dim?: boolean;
  selected?: boolean;
};

const rows: Row[] = [
  { name: "历史记录模式", icon: "clock", level: 0 },
  { name: "模型视图", icon: "greenCube", level: 0, box: "+" },
  { name: "摄像机", icon: "camera", level: 0, box: "+", ticked: true },
  { name: "模型历史记录", icon: "folder", level: 0, box: "-" },
  { name: "基准坐标系", suffix: " (0)", icon: "csys", level: 1, dim: true },
  { name: "拉伸", suffix: " (1)", icon: "extrudeSmall", level: 1 },
  { name: "壳", suffix: " (2)", icon: "shell", level: 1 },
  { name: "拉伸", suffix: " (3)", icon: "extrudeSmall", level: 1 },
  { name: "草图", suffix: " (4) “SKETCH_...", icon: "sketch", level: 1, dim: true },
  { name: "拉伸", suffix: " (5)", icon: "extrudeSmall", level: 1 },
  { name: "拉伸", suffix: " (6)", icon: "extrudeSmall", level: 1 },
  { name: "拉伸", suffix: " (7)", icon: "extrudeSmall", level: 1, selected: true },
  { name: "边倒圆", suffix: " (8)", icon: "blendSmall", level: 1 },
  { name: "边倒圆", suffix: " (9)", icon: "blendSmall", level: 1 },
  { name: "草图", suffix: " (10) “SKETCH...", icon: "sketch", level: 1 },
  { name: "拉伸", suffix: " (12)", icon: "extrudeSmall", level: 1 },
  { name: "倒斜角", suffix: " (13)", icon: "chamferSmall", level: 1 },
];

function Guide({ row, first, last }: { row: Row; first: boolean; last: boolean }) {
  if (row.level === 1) {
    return (
      <svg width="41" height="19" className="shrink-0" aria-hidden="true">
        <path d={last ? "M29.5 0v10M30 9.5h9" : "M29.5 0v19M30 9.5h9"} stroke="#999" strokeDasharray="1 1" fill="none" />
      </svg>
    );
  }
  return (
    <svg width="19" height="19" className="shrink-0" aria-hidden="true">
      <path
        d={first ? "M10.5 9v10M11 9.5h8" : row.box === "-" ? "M10.5 0v6M14 9.5h5" : "M10.5 0v19M14 9.5h5"}
        stroke="#999"
        strokeDasharray="1 1"
        fill="none"
      />
      {row.box && (
        <>
          <rect x="5.5" y="5.5" width="8" height="8" rx="1" fill="#fff" stroke="#888" />
          <path d={row.box === "+" ? "M7 9.5h5M9.5 7v5" : "M7 9.5h5"} stroke="#222" />
        </>
      )}
    </svg>
  );
}

function TreeCell({ row, index }: { row: Row; index: number }) {
  const tone = row.selected ? "text-white bg-[#3399ff]" : row.dim ? "text-[#9a9a9a]" : "text-[#222]";
  return (
    <div className="flex items-center h-[19px] whitespace-nowrap">
      <Guide row={row} first={index === 0} last={index === rows.length - 1} />
      {row.level === 1 && (
        <label className="relative w-3 h-3 mr-[2px] shrink-0">
          <input
            type="checkbox"
            defaultChecked
            aria-label={row.name + row.suffix}
            className="appearance-none block w-3 h-3 bg-white border border-black"
          />
          <span className="absolute left-px top-px pointer-events-none">
            <Icon name="check" size={10} />
          </span>
        </label>
      )}
      {row.ticked && (
        <span className="pl-[3px] pr-px">
          <Icon name="check" size={12} />
        </span>
      )}
      <Icon name={row.icon} size={16} />
      <span className={`self-stretch flex items-center grow pl-[3px] ${tone}`}>
        {row.name}
        {row.suffix && <span className="font-['Liberation_Mono'] text-[10px] whitespace-pre">{row.suffix}</span>}
      </span>
    </div>
  );
}

function Navigator() {
  return (
    <section className="w-[273px] shrink-0 flex flex-col bg-[#ebebeb] border-x border-x-[#707070] border-t border-t-[#8a8a8a] px-[9px]">
      <header className="h-[34px] shrink-0 flex items-center gap-[13px] pl-[6px] pt-[4px]">
        <svg width="10" height="10" viewBox="0 0 10 10" aria-hidden="true">
          <path d="M0 10l3-3" stroke="#000" />
          <path d="M1 4l4-3 4-1 1 5-4 4-4-1z" fill="#222" />
          <circle cx="4" cy="6" r="2.5" fill="#f4ec60" stroke="#000" />
          <path d="M5 2l3-1" stroke="#e8e060" />
        </svg>
        <h1 className="text-[13px] leading-4 font-bold">部件导航器</h1>
      </header>
      <div className="grow min-h-0 flex flex-col border border-b-0 border-[#6e6e6e] bg-white overflow-hidden">
        <table className="w-full table-fixed border-collapse text-xs leading-4">
          <thead>
            <tr className="h-[17px] bg-linear-to-b from-[#f4f4f4] to-[#d6d8da]">
              <th className="p-0 h-4 text-left font-normal border-b border-[#8a8a8a]">
                <span className="flex items-center h-4 pl-[6px] gap-4">
                  名称
                  <span className="border-x-[5px] border-b-[5px] border-x-transparent border-b-black" />
                </span>
              </th>
              <th className="w-[51px] p-0 pl-[5px] h-4 text-left font-normal border-b border-l border-[#8a8a8a]">附注</th>
            </tr>
          </thead>
          <tbody>
            {rows.map((row, i) => (
              <tr key={i} className="h-5 odd:bg-white even:bg-[#f5f5f5] border-b border-[#e4e4e4]">
                <td className="p-0 h-5">
                  <TreeCell row={row} index={i} />
                </td>
                <td className={row.selected ? "border-l border-[#e4e4e4] bg-[#3399ff]" : "border-l border-[#e4e4e4]"} />
              </tr>
            ))}
          </tbody>
        </table>
        <div className="grow flex bg-[repeating-linear-gradient(#f5f5f5_0_19px,#e4e4e4_19px_20px,#fff_20px_39px,#e4e4e4_39px_40px)]">
          <span className="grow" />
          <span className="w-[51px] border-l border-[#e4e4e4]" />
        </div>
      </div>
    </section>
  );
}

const tabGroups = [
  ["asm", "constraint", "partNav", "books"],
  ["hd3d"],
  ["web"],
  ["clock", "roles", "rainbow", "weld", "people", "portrait", "shapes"],
];

function ResourceBar() {
  return (
    <aside className="w-[33px] shrink-0 bg-[#b0b0b0] border-t-2 border-[#8e8e8e] pt-[15px] flex flex-col gap-[14px]">
      {tabGroups.map((group, i) => (
        <div key={i} className="flex flex-col gap-[2px] items-end">
          {group.map((name) => (
            <button
              key={name}
              aria-label={name}
              className={
                name === "partNav"
                  ? "w-[29px] h-10 flex items-center justify-center bg-[#ebebeb] border border-r-0 border-[#666] rounded-l"
                  : "w-[27px] h-10 flex items-center justify-center bg-linear-to-b from-[#dedede] to-[#c9c9c9] border border-r-0 border-[#666] rounded-l"
              }
            >
              <Icon name={name} size={23} />
            </button>
          ))}
        </div>
      ))}
    </aside>
  );
}

/* ---------- graphics window ---------- */

function Model() {
  return (
    <svg
      width="450"
      height="310"
      viewBox="0 0 1350 930"
      className="absolute left-[514px] top-[283px]"
      role="img"
      aria-label="模型"
      stroke="#f79f48"
      strokeWidth="8"
      strokeLinejoin="round"
    >
      <path d="M52 390L52 515Q55 540 85 555V425z" fill="url(#mLeft)" />
      <path d="M85 420V555L850 880V745z" fill="#8f5e29" />
      <path d="M850 740V880Q900 900 960 862V725z" fill="url(#mCorner)" />
      <path d="M960 725V862L1285 572V430z" fill="#c07b36" />
      <path d="M1285 430V572L1303 545 1299 405z" fill="#8f5e29" />
      <path
        d="M50 375Q50 360 70 345L385 65Q420 36 470 40 495 42 520 55L1260 368Q1300 388 1299 412 1297 430 1280 446L975 722Q945 756 895 758 865 758 840 745L85 424Q45 405 50 375z"
        fill="#ffd460"
      />
      {/* inner walls */}
      <path d="M430 75V172L155 414Q125 405 112 385L100 376z" fill="#c07b36" stroke="none" />
      <path d="M430 75L497 85V178L430 172z" fill="#8f5e29" stroke="none" />
      <path d="M452 85L495 82V172H452z" fill="url(#mHole)" stroke="none" />
      <path d="M495 82L1240 400 1246 432 1196 472 880 345 740 288 497 178z" fill="#8f5e29" />
      <path d="M1240 400l10 8v22l-10 8z" fill="#7c4f23" />
      <path
        d="M92 378L110 384Q118 408 150 420L460 547 860 720Q900 742 935 716L1246 432M430 72V172L155 416M452 88V176M430 72Q440 80 495 80M430 172L470 178 497 178M100 374L430 72"
        fill="none"
        strokeWidth="6"
      />
      <path d="M742 290L462 545" fill="none" strokeWidth="6" />
      <path d="M740 288L880 348" fill="none" strokeWidth="14" />
      <path d="M770 490L622 614 642 620 776 508z" fill="#c07b36" strokeWidth="5" />
      {/* holes */}
      <path d="M445 345Q445 272 556 271 668 272 668 338V355L600 408Q560 414 520 408 445 392 445 345z" fill="url(#mHole)" />
      <path d="M452 355Q475 311 556 311 635 311 662 350L600 408Q560 414 520 408 460 394 452 355z" fill="#d7d8da" />
      <path d="M290 474Q305 414 400 414 505 416 509 478L508 502 462 544 435 537z" fill="url(#mHole)" />
      <path d="M305 483Q340 454 400 455 480 455 504 500L462 544 440 540z" fill="#dbdcde" stroke="none" />
      <path d="M305 483Q340 454 400 455 480 455 504 500" fill="none" />
      <ellipse cx="641" cy="462" rx="43" ry="28" fill="url(#mHole)" />
      {/* split ring: outer walls, floor seen inside, inner walls, top faces */}
      <path d="M772 460V545Q782 590 820 616V512z" fill="#a56a2f" />
      <path d="M862 535V635C960 655 1070 620 1085 550V450L950 500z" fill="url(#mCorner)" />
      <path d="M836 500L866 534 1020 520 1056 440 1024 396 996 384 880 400z" fill="#ffd460" stroke="none" />
      <path d="M805 450Q808 480 835 498 890 462 978 470V372Q880 365 835 395 802 415 805 450z" fill="url(#mRing)" />
      <path d="M1000 388L1022 400V430L1000 452z" fill="#8f5e29" strokeWidth="5" />
      <path d="M818 516Q772 492 772 450C776 390 850 350 925 352Q965 350 995 360L976 374C880 366 804 400 805 450Q810 482 836 500z" fill="#ffd460" />
      <path d="M978 374L995 360V452L980 468z" fill="#c07b36" />
      <path d="M818 516L838 504V600L822 616z" fill="#c07b36" />
      <path d="M1022 398Q1050 420 1050 450 1044 475 1024 492z" fill="#a0652c" />
      <path d="M1037 378C1075 400 1086 430 1083 455 1078 520 985 558 860 542L878 520C975 535 1050 500 1050 455Q1050 420 1020 396z" fill="#ffd460" />
    </svg>
  );
}

function Watermark() {
  return (
    <div className="absolute right-[25px] bottom-[13px] flex items-center gap-2 text-[#f3f4f6]">
      <svg width="72" height="82" viewBox="60 32 216 246" aria-hidden="true">
        <path d="M105 70L168 34 212 58Q232 90 228 120 190 70 105 70z" fill="#cbe6f5" />
        <path d="M62 155V94L98 74Q130 70 165 84 95 100 62 155z" fill="#b3dcf3" />
        <path d="M214 58L275 94V150Q260 175 230 188 242 120 214 58z" fill="#84cdf0" />
        <path d="M108 125V190Q112 220 122 248L62 217V160Q80 132 108 125z" fill="#9ad3f0" />
        <path d="M275 156V215L238 236Q200 240 168 225 240 210 275 156z" fill="#74bfe6" />
        <path d="M110 192Q160 240 230 240L168 278 126 252Q112 225 110 192z" fill="#6fc6ef" />
        <path d="M168 86L228 120V188L168 222 108 188V120z" fill="#e6e8ea" />
        <path d="M168 100L215 127 168 155 121 127z" fill="#b3dcf3" />
        <path d="M121 130L167 157V210L121 184z" fill="#9ad3f0" />
        <path d="M170 157L216 130V184L170 210z" fill="#74bfe6" />
      </svg>
      <div className="flex flex-col">
        <span className="text-[42px] leading-[44px] font-bold">3D世界网</span>
        <span className="text-base leading-4 font-bold font-['DejaVu_Sans']">WWW.3DSJW.COM</span>
      </div>
    </div>
  );
}

export default function App() {
  return (
    <div className="h-screen flex flex-col overflow-hidden bg-[#b0b0b0] text-black font-['Liberation_Sans','Noto_Sans_CJK_SC',sans-serif]">
      <Gradients />
      <div className="h-[22px] shrink-0 flex items-center gap-[5px] pl-[3px] text-white text-[13px] font-['Noto_Sans','Noto_Sans_CJK_SC',sans-serif] bg-[linear-gradient(#000_0_1px,#77777c_2px,#3c3c40_8px,#1a1a1a_9px,#141414_22px)]">
        <Icon name="nx" size={16} />
        <span className="whitespace-nowrap">NX 8 - 建模 - [20190415.prt （修改的） ]</span>
      </div>

      <div className="shrink-0 bg-linear-to-b from-[#e6e6e6] to-[#c9c9c9]">
        <MenuBar />
        <div className="flex h-[34px] overflow-hidden text-xs">
          <Toolbar>
            <button className="shrink-0 flex items-center gap-[3px] pl-[3px]">
              <Icon name="nx" />
              开始
            </button>
            <Tools items="v file open save | cut copy paste | undo redo |" />
            <button className="shrink-0 flex items-center gap-[3px] pl-1 pr-[5px]">
              <Icon name="binoculars" />
              命令查找器
            </button>
            <Tools items="star v | rotate windows | info >" />
          </Toolbar>
          <Toolbar>
            <Tools items="fit v angle v shaded v *yin clip grid3d section v swatch v | planeA planeB >" />
          </Toolbar>
          <Toolbar>
            <Tools items="hexMove v hexMove hexPull hexPage hexCyl hexSplit hexRound v hexDel hexCopy v hexPair v hexDim v hexFrame hexTri >" />
          </Toolbar>
        </div>
        <div className="flex h-[34px] overflow-hidden">
          <Toolbar>
            <Tools items="wrench trimCurve trimCross scurve corner offset project >" />
          </Toolbar>
          <Toolbar>
            <Tools items="line arc circLine circChain rect circle hexagon ellipse chamferLine parabola helix points plus surfCurve spline offsetHeart bridge hooksA hooksB surfDown curvesIn sheets sectionBox wrap >" />
          </Toolbar>
        </div>
        <div className="flex h-[34px] overflow-hidden">
          <Toolbar>
            <Tools items="datum v extrude revolve box cyl cone sphere hole boss pocket pad emboss sweepPad slot groove thread | pattern liftPlane instance unite v book boxBool sheetCut sewn slab shell thicken scale | blend chamfer faceBlend softBlend bridgeSurf mesh styled pyramid gem pipeBend tube >" />
          </Toolbar>
          <Toolbar end={false}>
            <Tools items="boxDim hexBlueDim gearWrench replace | moveFeat reorder xDim | spool" />
          </Toolbar>
        </div>
      </div>

      <div className="h-7 shrink-0 flex items-stretch pl-[5px] border-t border-[#8c8c8c] bg-linear-to-b from-[#b8b8b8] via-[#cfcfcf] via-30% to-[#dadada]">
        <FilterSelect label="选择过滤器" value="没有选择过滤器" className="w-[110px] mr-2" />
        <FilterSelect label="选择范围" value="整个装配" className="w-[116px] mr-[5px]" />
        <SnapTools items="dimLink | filterBox , back eraserBox undoTarget backTarget chainBrush | marquee v" />
        <span className="w-2 shrink-0" />
        <SnapTools items="*snapAll snapCup *endPt *midPt ctrlPt interPt *centerPt quadPt *existPt *onCurve onFace | shaded" />
      </div>

      <div className="grow min-h-0 flex">
        <ResourceBar />
        <Navigator />
        <main className="relative grow min-w-0 overflow-hidden bg-linear-to-b from-[#b2b3b5] via-[#d3d4d6] via-55% to-[#e8e9ea] border-t border-[#a2a2a2]">
          <Model />
          <Watermark />
          <div className="absolute left-[60px] bottom-0 flex items-end gap-2 text-[#1448d8] text-xs leading-3">
            Z
            <span className="w-[6px] h-[2px] bg-[#a4a4a4] rounded-t" />
          </div>
        </main>
      </div>
    </div>
  );
}
